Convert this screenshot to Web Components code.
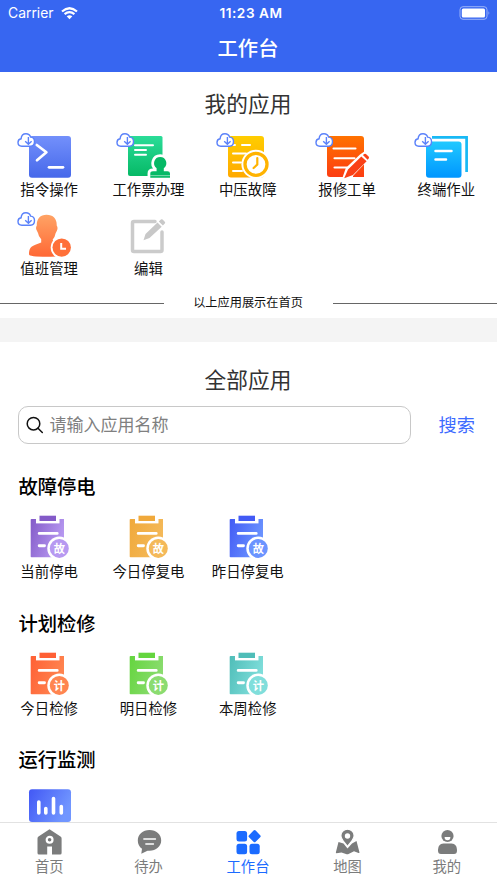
<!DOCTYPE html>
<html lang="zh-CN">
<head>
<meta charset="utf-8">
<title>工作台</title>
<style>
html,body{margin:0;padding:0;height:100%;overflow:hidden;background:#fff}
body{font-family:"Noto Sans CJK SC",sans-serif;color:#111}
</style>
</head>
<body>
<work-screen></work-screen>
<script>
const define = (name, render) => customElements.define(name, class extends HTMLElement {
  connectedCallback() {
    if (!this.shadowRoot) this.attachShadow({mode: 'open'}).innerHTML = render(this);
  }
});

const gradient = (a, b, diagonal) =>
  `<defs><linearGradient id="g" x1="0" y1="0" x2="${diagonal ? 1 : 0}" y2="${diagonal ? .4 : 1}"><stop stop-color="${a}"/><stop offset="1" stop-color="${b}"/></linearGradient></defs>`;

const cloud = `<path d="M21.8 16.2C19.3 16.2 18 14.6 18 12.5C18 10.4 19.3 9 21.1 8.8C21.3 5.7 23.3 3.8 26 3.8C28.3 3.8 29.9 5 30.6 7.1C33 7.2 34.5 9 34.5 11.6C34.5 14.4 32.8 16.2 30.5 16.2Z" fill="#fff" stroke="#5b82fa" stroke-width="1.4"/><path d="M28.400 7V14M25.200 11.200L28.400 14.200L31.600 11.200" fill="none" stroke="#5b82fa" stroke-width="1.400"/>`;

const icons = {
  command: gradient('#7390fb', '#4668ea') + `<rect x="29" y="6" width="42" height="41.700" rx="3" fill="url(#g)"/><path d="M36.800 15L46.400 22.300L37 30.200" fill="none" stroke="#fff" stroke-width="2.700" stroke-linecap="round" stroke-linejoin="round"/><path d="M49 37.300H63" stroke="#fff" stroke-width="2.700" stroke-linecap="round"/>` + cloud,
  ticket: gradient('#2bdc98', '#06b966') + `<path d="M31 6H62Q63.500 6 63.500 7.500V46H31Q29 46 29 44V8Q29 6 31 6Z" fill="url(#g)"/><path d="M36 15.200H54M36 20H47M36 24.800H47" stroke="#fff" stroke-width="2" stroke-linecap="round"/><path d="M61.200 27a6.200 6.200 0 0 1 3.600 11.200V41.200H68.500Q71 41.200 71 43.500V47.700H51.300V43.500Q51.300 41.200 54 41.200H57.600V38.200A6.200 6.200 0 0 1 61.200 27Z" fill="#06b966" stroke="#fff" stroke-width="5.500" paint-order="stroke"/><path d="M49 48.200H73V52H49Z" fill="#fff"/><path d="M51.300 45.600H71" stroke="#fff" stroke-opacity=".6" stroke-width=".8"/>` + cloud,
  fault: gradient('#ffcd00', '#ffa900') + `<rect x="29" y="6" width="36" height="41.500" rx="3" fill="url(#g)"/><path d="M28 15H36M43 15H51M34 23.500H47M34 32.500H42M34 41H43" stroke="#fff" stroke-width="2" stroke-linecap="round"/><circle cx="57" cy="34.300" r="14.600" fill="#fff"/><circle cx="57" cy="34.300" r="11" fill="none" stroke="#ffb300" stroke-width="3.300"/><path d="M58.300 28V34.500L54.600 38" fill="none" stroke="#ffb300" stroke-width="2.200" stroke-linecap="round"/>` + cloud,
  repair: gradient('#ff7200', '#fc3d12') + `<path d="M32 6H63Q66 6 66 9V47H32Q29 47 29 44V9Q29 6 32 6Z" fill="url(#g)"/><path d="M35.500 18.500H57.500M36.500 28.300H56.500M36.500 37.500H49" stroke="#fff" stroke-width="2.100" stroke-linecap="round"/><path d="M44 49L47.800 38L62 24.500L67 21L73 27L55 46V49Z" fill="#fff"/><path d="M46.200 48.300L50 39.500L63.300 26.500L68.600 31.300L55 45ZM64.900 25.100L66.300 24Q67.300 23.300 68.200 24.200L70.600 26.600Q71.400 27.500 70.700 28.400L69.600 29.700Z" fill="#fa4117"/>` + cloud,
  terminal: gradient('#20c9ff', '#0096ff') + `<path d="M35 7.400H69.600V42" fill="none" stroke="#18b9f5" stroke-width="2.700"/><rect x="28" y="9.500" width="38.500" height="39" rx="3" fill="#fff"/><rect x="29" y="11.500" width="35.500" height="36.200" rx="3" fill="url(#g)"/><path d="M38.500 21H54.500M38.500 29.500H49" stroke="#fff" stroke-width="2.500" stroke-linecap="round"/>` + cloud,
  duty: gradient('#ffa365', '#ff6835') + `<path d="M46.500 5.700C53.500 5.700 57 10 56.700 16.500Q58.200 18.500 57 21.500L55.600 24.200Q54.800 28.500 52.700 30.500L53.500 34Q62 36.500 65 39V46Q64 47.700 47 47.700Q29 47.700 29 45.500C29 39.500 31 37.200 36 35.600L41.200 33.600V30.300Q38.500 27.500 38 24L36.300 20.600Q35.600 18.500 36.800 16.500C36.500 10 40 5.700 46.500 5.700Z" fill="url(#g)"/><circle cx="61.700" cy="38.600" r="11" fill="#fff"/><circle cx="61.700" cy="38.600" r="9.200" fill="#ff7039"/><path d="M61.200 34V39.800H66" stroke="#fff" stroke-width="2" fill="none"/>` + cloud,
  edit: `<path d="M56 12.500H35Q33.500 12.500 33.500 14V41Q33.500 42.500 35 42.500H61.500Q63 42.500 63 41V23" fill="none" stroke="#cbcbcb" stroke-width="3.500" stroke-linecap="round"/><path d="M44.500 31.300L46.500 25L58.500 13.500L62.700 17.700L50.500 29ZM59.800 12.400L61.900 10.500Q62.800 9.800 63.600 10.600L66 13Q66.500 13.800 65.800 14.500L63.900 16.500Z" fill="#c8c8c8"/>`,
  chart: gradient('#4258f5', '#7196ff', true) + `<rect x="29" y="4.300" width="42" height="32.700" rx="3" fill="url(#g)"/><path d="M38.800 17V28M45.800 23.500V28M53.500 13.500V28M61.300 21.500V28" stroke="#fff" stroke-width="3.600" stroke-linecap="round"/>`
};

const board = (a, b, mark) => gradient(a, b, true) +
  `<path d="M31.500 7H64V45.300H31.500Q30.700 45.300 30.700 44.500V7.800Q30.700 7 31.500 7Z" fill="url(#g)"/><path d="M36 3H59.500V11.400H36Z" fill="#fff"/><path d="M39.500 3.700H56V9H39.500Z" fill="${a}"/><path d="M39.200 21.400H57.200M39.200 33.700H44.500" stroke="#fff" stroke-width="2.900" stroke-linecap="round"/><circle cx="59.300" cy="36.400" r="12" fill="#fff"/><circle cx="59.300" cy="36.400" r="9.500" fill="${b}"/><text x="59.300" y="40.500" font-size="11.300" font-weight="700" text-anchor="middle" fill="#fff" font-family="Noto Sans CJK SC,sans-serif">${mark}</text>`;

const boards = {
  purple: ['#835ac8', '#b799f1', '故'], amber: ['#f0a93b', '#f4b959', '故'], blue: ['#425af5', '#6b94ff', '故'],
  orange: ['#ff6035', '#ff8550', '计'], green: ['#64d53e', '#8bdc70', '计'], teal: ['#4fbdb8', '#80dedb', '计']
};

define('app-tile', el => {
  const name = el.getAttribute('icon');
  return `<style>:host{display:block;height:79px;text-align:center;font-size:14.400px;line-height:17px;white-space:nowrap}svg{display:block;width:99px;height:50px;overflow:visible}span{display:block;margin-right:1px}</style>
  <svg viewBox="0 0 99 50">${icons[name] || board(...boards[name])}</svg><span><slot></slot></span>`;
});

define('app-grid', () => `<style>:host{display:grid;grid-template-columns:repeat(5,99.300px)}</style><slot></slot>`);

define('page-title', () => `<style>:host{display:block;font-size:21.700px;line-height:38px;height:40px;padding-right:1px;text-align:center;color:#333}</style><slot></slot>`);

define('app-group', el => `<style>:host{display:block;height:136.600px}h2{margin:0 0 10px 18.500px;font-size:19.300px;font-weight:500;line-height:32px;color:#000}</style>
  <h2>${el.getAttribute('heading')}</h2><app-grid><slot></slot></app-grid>`);

define('status-header', () => `<style>
  :host{display:block;flex:none;height:72px;background:#3766f1;color:#fff}
  .bar{display:grid;grid-template-columns:1fr auto 1fr;align-items:center;height:26px;padding:0 6px 0 8px;font:13.900px/26px Inter,sans-serif}
  .left{display:flex;align-items:center;gap:7px}
  .time{font-size:13.600px;font-weight:600;letter-spacing:.55px;padding-left:3px}
  .battery{justify-self:end}
  svg{display:block}
  h1{margin:0;font-size:20.300px;line-height:42px;font-weight:500;text-align:center;padding-right:1px}
  </style>
  <div class="bar"><div class="left"><span>Carrier</span><svg width="17" height="13" viewBox="0 0 17 13"><path d="M1 4.500Q8.500-2 16 4.500M3.600 7.200Q8.500 3.100 13.400 7.200" fill="none" stroke="#fff" stroke-width="2.200"/><path d="M5.700 9.300Q8.500 7 11.300 9.300L8.500 12.200Z" fill="#fff"/></svg></div>
  <span class="time">11:23 AM</span>
  <svg class="battery" width="32" height="14" viewBox="0 0 32 14"><rect x="1" y=".7" width="27" height="12.600" rx="3" fill="none" stroke="#9bb3f8"/><rect x="2.800" y="2.500" width="23.200" height="9" rx="1.500" fill="#fff"/><path d="M29.500 5Q31.200 7 29.500 9Z" fill="#9bb3f8"/></svg></div>
  <h1>工作台</h1>`);

define('line-note', () => `<style>:host{display:flex;align-items:center;justify-content:space-between;height:28px;margin-bottom:2px;font-size:12.200px;line-height:28px}i{width:164px;height:1px;background:#666;margin-top:3px}span{margin-right:1px}</style><i></i><span><slot></slot></span><i></i>`);

define('search-row', () => `<style>
  :host{display:flex;align-items:center;padding:5.500px 22px 0 18px;justify-content:space-between}
  .field{box-sizing:border-box;width:393px;height:38px;border:1px solid #c8c8c8;border-radius:10px;display:flex;align-items:center;padding-left:6.500px;gap:6px;font-size:17px;line-height:24px;color:#808080}
  .field span,.go{margin-top:-2px}
  .go{font-size:18.200px;color:#3d6bff}
  svg{display:block}
  </style><div class="field"><svg width="18" height="18" viewBox="0 0 18 18" fill="none" stroke="#111" stroke-width="1.500" stroke-linecap="round"><circle cx="7.500" cy="7.700" r="6.300"/><path d="M12 12.300L16.300 16.500"/></svg><span>请输入应用名称</span></div><span class="go">搜索</span>`);

const tabs = {
  home: `<path d="M12.500 1.200L23.500 8.500Q24.600 9.200 24.600 10.500V25Q24.600 26.500 23.100 26.500H15V18.500H10.200V26.500H2Q.5 26.500 .5 25V10.500Q.5 9.200 1.500 8.500Z"/><circle cx="12.600" cy="11.800" r="2.900" fill="#777" stroke="#fff" stroke-width="2.200"/>`,
  chat: `<path d="M12.500 2C19.300 2 24.200 6.500 24.200 12.400S19 22.700 12.500 22.700H10.500L4.300 25.800L5 20.800Q.8 17.600 .8 12.400C.8 6.500 5.800 2 12.500 2Z"/><path d="M6.800 11H18.500M8.800 16H16.500" stroke="#fff" stroke-width="1.300" stroke-linecap="round"/>`,
  work: `<rect x=".5" y="3" width="10.600" height="10.600" rx="2.500"/><rect x=".5" y="15.700" width="10.600" height="10.600" rx="2.500"/><rect x="13.500" y="15.700" width="10.200" height="10.600" rx="2.500"/><rect x="13.900" y="3.500" width="9.400" height="9.400" rx="1.500" transform="rotate(45 18.600 8.200)"/>`,
  map: `<path d="M3.500 14L8.500 15.500L12.500 20.500L17 15.500L21.500 13L24.500 24.500Q24.500 25.200 23.500 24.900L19 23.200L13 26.200Q12 26.500 11 26L6.500 24.500L1.500 25.200Q.7 25.200 .9 24.300Z"/><path d="M12.500 1.200C16.200 1.200 19.100 4.100 19.100 7.500C19.100 11.800 15 14.500 12.500 18.500C10 14.500 5.900 11.800 5.900 7.500C5.900 4.100 8.800 1.200 12.500 1.200Z" stroke="#fff" stroke-width="1.200"/><circle cx="12.500" cy="8" r="2.700" fill="#fff"/>`,
  user: `<circle cx="12.500" cy="8" r="6.100"/><path d="M9.600 9H15.400Q15.400 12.200 12.500 12.200Q9.600 12.200 9.600 9Z" fill="#fff"/><path d="M8.500 15.400H16.500C20.300 15.400 22 18.500 22 22.500Q22 26 19 26H6Q3 26 3 22.500C3 18.500 4.700 15.400 8.500 15.400Z"/>`
};
define('tab-item', el => `<style>:host{flex:1;display:flex;flex-direction:column;align-items:center;color:#7b7c7c;font-size:14.300px;line-height:17px;padding-top:5px}:host([active]){color:#1b6bff}svg{display:block;margin-bottom:1px}span{margin-right:1px}</style><svg width="25" height="28" viewBox="0 0 25 28" fill="currentColor">${tabs[el.getAttribute('icon')]}</svg><span><slot></slot></span>`);
define('tab-bar', () => `<style>:host{display:flex;flex:none;box-sizing:border-box;height:61px;border-top:1px solid #e2e2e2;background:#fff}</style><slot></slot>`);

define('work-screen', () => `<style>
  :host{display:flex;flex-direction:column;width:497px;height:883px;background:#fff}
  main{flex:1;min-height:0;overflow:hidden}
  .mine{padding-top:12px}.mine app-grid{margin-top:6px}
  .band{height:24px;background:#f4f4f4}
  .all{padding-top:18px}
  .groups{padding-top:26.500px}
  </style>
  <status-header></status-header>
  <main>
    <section class="mine"><page-title>我的应用</page-title>
      <app-grid>
        <app-tile icon="command">指令操作</app-tile><app-tile icon="ticket">工作票办理</app-tile><app-tile icon="fault">中压故障</app-tile><app-tile icon="repair">报修工单</app-tile><app-tile icon="terminal">终端作业</app-tile><app-tile icon="duty">值班管理</app-tile><app-tile icon="edit">编辑</app-tile>
      </app-grid>
      <line-note>以上应用展示在首页</line-note>
    </section>
    <div class="band"></div>
    <section class="all"><page-title>全部应用</page-title><search-row></search-row>
      <div class="groups">
        <app-group heading="故障停电"><app-tile icon="purple">当前停电</app-tile><app-tile icon="amber">今日停复电</app-tile><app-tile icon="blue">昨日停复电</app-tile></app-group>
        <app-group heading="计划检修"><app-tile icon="orange">今日检修</app-tile><app-tile icon="green">明日检修</app-tile><app-tile icon="teal">本周检修</app-tile></app-group>
        <app-group heading="运行监测"><app-tile icon="chart"></app-tile></app-group>
      </div>
    </section>
  </main>
  <tab-bar><tab-item icon="home">首页</tab-item><tab-item icon="chat">待办</tab-item><tab-item icon="work" active>工作台</tab-item><tab-item icon="map">地图</tab-item><tab-item icon="user">我的</tab-item></tab-bar>`);
</script>
</body>
</html>
